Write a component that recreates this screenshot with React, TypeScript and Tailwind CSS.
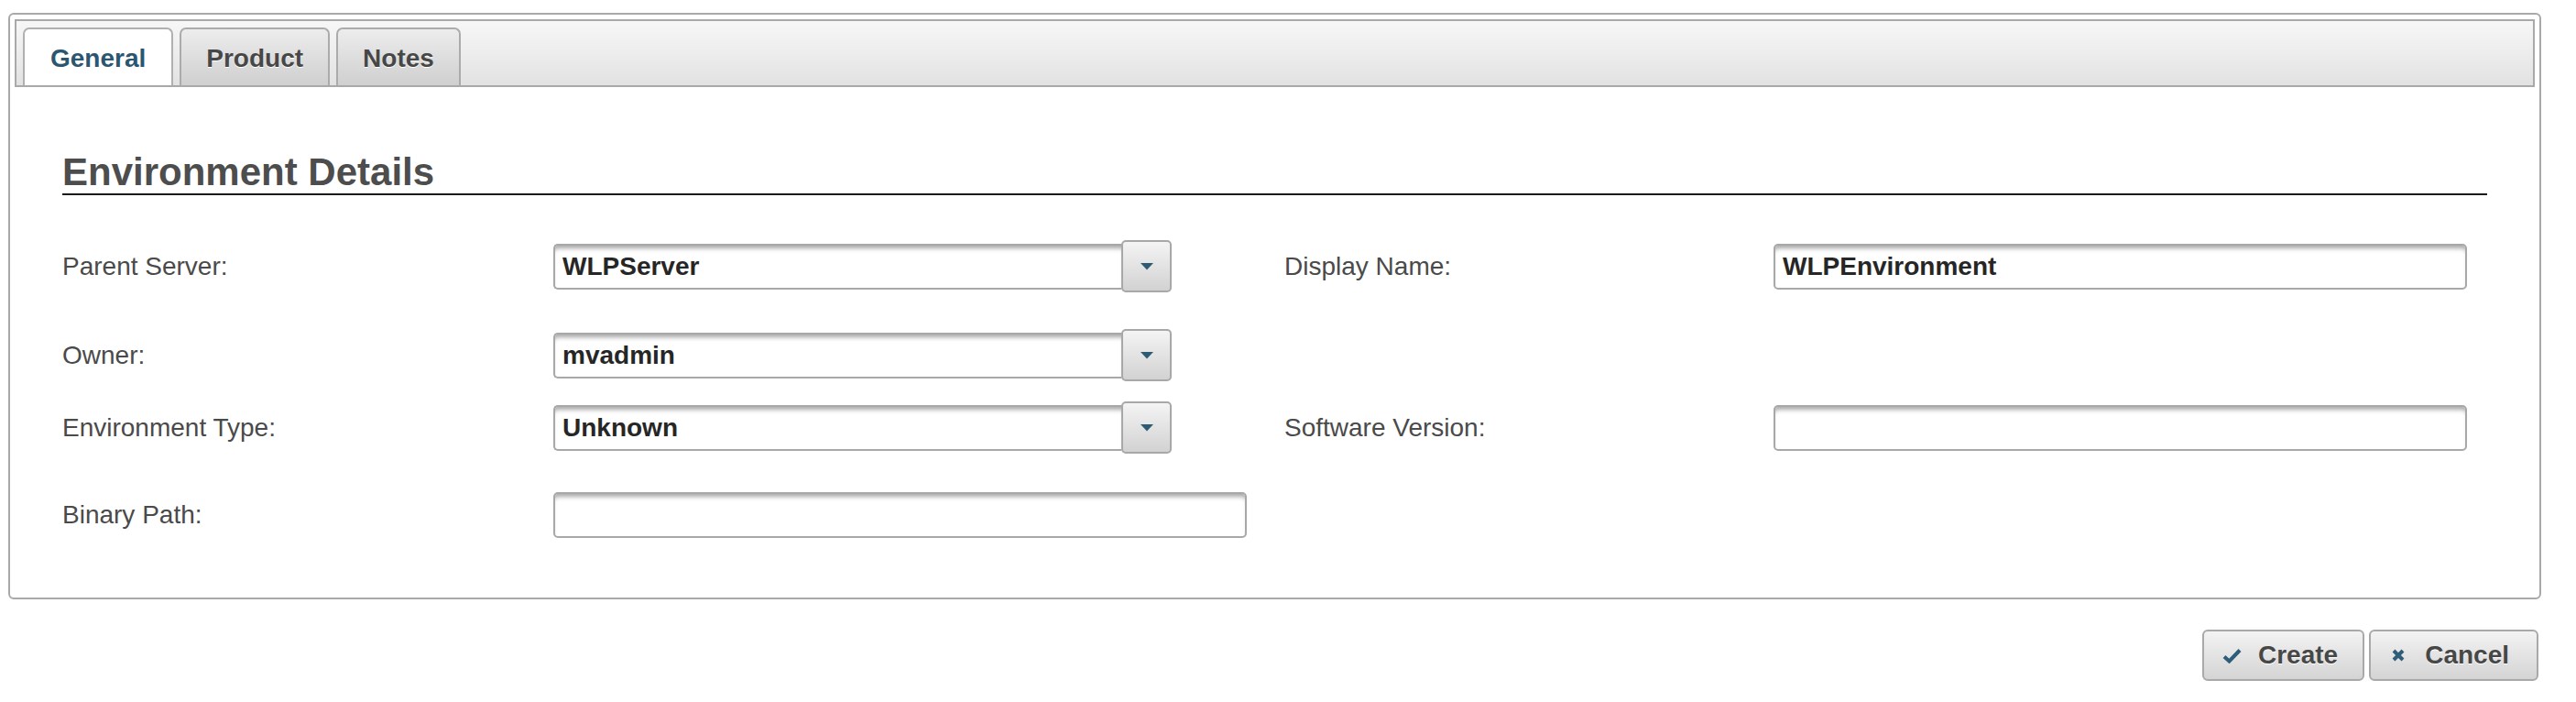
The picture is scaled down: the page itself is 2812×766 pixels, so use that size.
import React from "react";

const font = { fontFamily: '"Liberation Sans", Arial, Helvetica, sans-serif' };

function TextInput({ value, width }: { value?: string; width: string }) {
  return (
    <div
      className={`${width} h-[50px] rounded-[5px] border-2 border-[#a8a8a8] bg-white shadow-[inset_0_6px_5px_-3px_rgba(0,0,0,0.35)] flex items-center pl-[8px] text-[28px] font-bold text-[#262626]`}
    >
      {value}
    </div>
  );
}

function Select({ value }: { value: string }) {
  return (
    <div className="flex items-center w-[675px]">
      <div className="w-[620px] h-[50px] rounded-l-[5px] border-2 border-r-0 border-[#a8a8a8] bg-white shadow-[inset_0_6px_5px_-3px_rgba(0,0,0,0.35)] flex items-center pl-[8px] text-[28px] font-bold text-[#262626]">
        {value}
      </div>
      <div className="w-[55px] h-[57px] rounded-[5px] border-2 border-[#a8a8a8] bg-gradient-to-b from-[#f4f4f4] to-[#d2d2d2] flex items-center justify-center">
        <svg width="14" height="8" viewBox="0 0 14 8">
          <path d="M0 0 H14 L7 7.5 Z" fill="#2e5b74" />
        </svg>
      </div>
    </div>
  );
}

function Label({ children }: { children: React.ReactNode }) {
  return <div className="text-[28px] text-[#4a4a4a] leading-none">{children}</div>;
}

export default function App() {
  return (
    <div className="w-[2812px] h-[766px] bg-white overflow-hidden" style={font}>
      <div className="ml-[9px] mt-[14px] w-[2765px] h-[640px] border-2 border-[#a9a9a9] rounded-[6px] p-[5px] flex flex-col">
        {/* Tab bar */}
        <div className="h-[74px] border-2 border-[#a9a9a9] bg-gradient-to-b from-[#f7f7f7] to-[#e2e2e2] flex items-end pl-[7px] gap-[7px]">
          <div className="h-[63px] pt-[3px] px-[28px] rounded-t-[7px] border-2 border-b-0 border-[#b0b0b0] bg-white flex items-center text-[28px] font-bold text-[#2b566f]">
            General
          </div>
          <div className="h-[63px] pt-[3px] px-[27px] rounded-t-[7px] border-2 border-b-0 border-[#ababab] bg-gradient-to-b from-[#ededed] to-[#cfcfcf] flex items-center text-[28px] font-bold text-[#474747] [text-shadow:0_1px_0_#ffffff]">
            Product
          </div>
          <div className="h-[63px] pt-[3px] px-[27px] rounded-t-[7px] border-2 border-b-0 border-[#ababab] bg-gradient-to-b from-[#ededed] to-[#cfcfcf] flex items-center text-[28px] font-bold text-[#474747] [text-shadow:0_1px_0_#ffffff]">
            Notes
          </div>
        </div>

        {/* Content */}
        <div className="px-[52px] pt-[72px]">
          <div className="text-[42px] leading-[42px] font-bold text-[#4d4d4d] pb-[2px] border-b-2 border-[#1a1a1a]">
            Environment Details
          </div>

          <div className="grid grid-cols-[536px_798px_534px_1fr] mt-[49px]">
            {/* Row 1 */}
            <div className="h-[57px] flex items-center"><Label>Parent Server:</Label></div>
            <div className="h-[57px] flex items-center"><Select value="WLPServer" /></div>
            <div className="h-[57px] flex items-center"><Label>Display Name:</Label></div>
            <div className="h-[57px] flex items-center"><TextInput value="WLPEnvironment" width="w-[757px]" /></div>

            {/* Row 2 */}
            <div className="h-[57px] mt-[40px] flex items-center"><Label>Owner:</Label></div>
            <div className="h-[57px] mt-[40px] flex items-center"><Select value="mvadmin" /></div>
            <div className="h-[57px] mt-[40px]" />
            <div className="h-[57px] mt-[40px]" />

            {/* Row 3 */}
            <div className="h-[57px] mt-[22px] flex items-center"><Label>Environment Type:</Label></div>
            <div className="h-[57px] mt-[22px] flex items-center"><Select value="Unknown" /></div>
            <div className="h-[57px] mt-[22px] flex items-center"><Label>Software Version:</Label></div>
            <div className="h-[57px] mt-[22px] flex items-center"><TextInput width="w-[757px]" /></div>

            {/* Row 4 */}
            <div className="h-[57px] mt-[38px] flex items-center"><Label>Binary Path:</Label></div>
            <div className="h-[57px] mt-[38px] flex items-center"><TextInput width="w-[757px]" /></div>
            <div className="h-[57px] mt-[38px]" />
            <div className="h-[57px] mt-[38px]" />
          </div>
        </div>
      </div>

      {/* Buttons */}
      <div className="w-[2771px] flex justify-end gap-[5px] mt-[33px]">
        <button className="h-[56px] pl-[19px] pr-[27px] rounded-[6px] border-2 border-[#a9a9a9] bg-gradient-to-b from-[#f3f3f3] to-[#d4d4d4] flex items-center text-[28px] font-bold text-[#474747] [text-shadow:0_1px_0_#ffffff]">
          <span className="w-[22px] flex justify-center mr-[18px]">
            <svg width="21" height="17" viewBox="0 0 21 17">
              <path d="M2 9.5 L7.5 14.5 L19 2.5" fill="none" stroke="#2d5d78" strokeWidth="4" strokeLinejoin="miter" />
            </svg>
          </span>
          Create
        </button>
        <button className="h-[56px] pl-[19px] pr-[30px] rounded-[6px] border-2 border-[#a9a9a9] bg-gradient-to-b from-[#f3f3f3] to-[#d4d4d4] flex items-center text-[28px] font-bold text-[#474747] [text-shadow:0_1px_0_#ffffff]">
          <span className="w-[22px] flex justify-center mr-[18px]">
            <svg width="14" height="14" viewBox="0 0 14 14">
              <path d="M2 2 L12 12 M12 2 L2 12" fill="none" stroke="#2d5d78" strokeWidth="4" />
            </svg>
          </span>
          Cancel
        </button>
      </div>
    </div>
  );
}
